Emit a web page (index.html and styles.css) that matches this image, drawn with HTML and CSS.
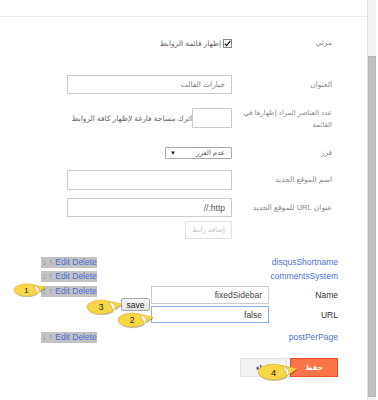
FILE: index.html
```html
<!DOCTYPE html>
<html lang="ar">
<head>
    <meta charset="UTF-8">
    <meta name="viewport" content="width=device-width, initial-scale=1.0">
    <title>إعدادات قائمة الروابط</title>
    <link rel="stylesheet" href="styles.css">
</head>
<body>
<svg class="defs" width="0" height="0">
    <symbol id="balloon" viewBox="0 0 38 18">
        <path d="M23 3.2 L36 6 L27 12.5 Z M1 9 A14 7 0 1 0 29 9 A14 7 0 1 0 1 9 Z" />
    </symbol>
</svg>
<div class="page">
    <main class="panel">
        <div class="topbar"></div>

        <!-- widget settings -->
        <form class="settings" dir="rtl">
            <div class="row row-visible">
                <span class="label">مرئي</span>
                <div class="field">
                    <span class="check">
                        <svg width="7" height="7" viewBox="0 0 7 7"><path d="M0.8 3.6 L2.6 5.6 L6.4 0.8" fill="none" stroke="#111" stroke-width="1.2"/></svg>
                    </span>
                    <span class="hint">إظهار قائمة الروابط</span>
                </div>
            </div>

            <div class="row row-title">
                <span class="label">العنوان</span>
                <div class="field">
                    <input class="text-input" type="text" value="خيارات القالب">
                </div>
            </div>

            <div class="row row-count">
                <span class="label label-two">عدد العناصر المراد إظهارها في القائمة</span>
                <div class="field">
                    <input class="text-input small-input" type="text" value="">
                    <span class="hint">اترك مساحة فارغة لإظهار كافة الروابط</span>
                </div>
            </div>

            <div class="row row-sort">
                <span class="label">فرز</span>
                <div class="field">
                    <div class="select"><span>عدم الفرز</span><span class="caret">▼</span></div>
                </div>
            </div>

            <div class="row row-name">
                <span class="label">اسم الموقع الجديد</span>
                <div class="field">
                    <input class="text-input" type="text" value="">
                </div>
            </div>

            <div class="row row-url">
                <span class="label">عنوان URL للموقع الجديد</span>
                <div class="field">
                    <input class="text-input url-input" type="text" value="http://">
                </div>
            </div>

            <div class="row row-add">
                <span class="label"></span>
                <div class="field">
                    <button class="add-btn" type="button" disabled>إضافة رابط</button>
                </div>
            </div>
        </form>

        <!-- link list -->
        <div class="links">
            <div class="link-row row-first">
                <span class="tools"><span class="arrows">↓ ↑</span> Edit Delete</span>
                <span class="link-name">disqusShortname</span>
            </div>
            <div class="link-row row-next">
                <span class="tools"><span class="arrows">↓ ↑</span> Edit Delete</span>
                <span class="link-name">commentsSystem</span>
            </div>
            <div class="link-row row-edit">
                <span class="tools"><span class="arrows">↓ ↑</span> Edit Delete</span>
                <div class="editor">
                    <button class="save-btn" type="button">save</button>
                    <input class="edit-input" type="text" value="fixedSidebar">
                    <span class="edit-label">Name</span>
                    <input class="edit-input edit-focus" type="text" value="false">
                    <span class="edit-label">URL</span>
                </div>
            </div>
            <div class="link-row row-last">
                <span class="tools"><span class="arrows">↓ ↑</span> Edit Delete</span>
                <span class="link-name">postPerPage</span>
            </div>

            <div class="actions">
                <button class="cancel-btn" type="button">إلغاء</button>
                <button class="save-main" type="button">حفظ</button>
            </div>
        </div>

        <!-- numbered callouts -->
        <svg class="callout callout-1" viewBox="0 0 38 18"><use href="#balloon" class="shadow" x="0.8" y="1.2"/><use href="#balloon" class="fill"/><text x="15" y="12.3">1</text></svg>
        <svg class="callout callout-3" viewBox="0 0 38 18"><use href="#balloon" class="shadow" x="0.8" y="1.2"/><use href="#balloon" class="fill"/><text x="15" y="12.3">3</text></svg>
        <svg class="callout callout-2" viewBox="0 0 38 18"><use href="#balloon" class="shadow" x="0.8" y="1.2"/><use href="#balloon" class="fill"/><text x="15" y="12.3">2</text></svg>
        <svg class="callout callout-4" viewBox="0 0 38 18"><use href="#balloon" class="shadow" x="0.8" y="1.2"/><use href="#balloon" class="fill"/><text x="15" y="12.3">4</text></svg>
    </main>

    <div class="scrollbar">
        <div class="scroll-thumb"></div>
    </div>
</div>
</body>
</html>
```

FILE: styles.css
```css
* {
    box-sizing: border-box;
}
body {
    margin: 0;
    background: #fff;
    font-family: "Liberation Sans", "DejaVu Sans", Arial, sans-serif;
    font-size: 8.5px;
    color: #555;
}
.defs {
    position: absolute;
}
.page {
    display: flex;
    width: 378px;
    height: 400px;
    overflow: hidden;
}
.panel {
    position: relative;
    width: 367px;
    flex: none;
}
.scrollbar {
    width: 9px;
    flex: none;
    background: #f3f3f3;
    border-left: 1px solid #e4e4e4;
}
.scroll-thumb {
    margin-top: 56px;
    height: 341px;
    background: #c1c1c1;
    border: 1px solid #b8b8b8;
}
.topbar {
    height: 17px;
    border-bottom: 1px solid #ececec;
}

/* settings form */
.settings {
    padding-right: 35px;
    font-size: 7.5px;
}
.row {
    display: grid;
    grid-template-columns: 95px 165px;
    column-gap: 5px;
    align-items: center;
}
.label {
    color: #888;
    text-align: right;
    line-height: 12px;
}
.field {
    display: flex;
    align-items: center;
}
.row-visible { margin-top: 20px; height: 12px; }
.row-title { margin-top: 26px; }
.row-count { margin-top: 13px; align-items: start; }
.row-sort { margin-top: 16px; }
.row-name { margin-top: 11px; }
.row-url { margin-top: 8px; }
.row-add { margin-top: 4px; }

.label-two {
    font-size: 7px;
}
.row-count .field {
    margin-top: 1px;
}
.check {
    width: 9px;
    height: 9px;
    border: 1px solid #888;
    background: #fff;
    display: flex;
    align-items: center;
    justify-content: center;
    margin-left: 2px;
}
.hint {
    color: #666;
    white-space: nowrap;
}
.text-input {
    width: 165px;
    height: 19px;
    border: 1px solid #ccc;
    padding: 0 6px;
    font: inherit;
    color: #777;
    background: #fff;
    outline: none;
}
.url-input {
    font-size: 8.5px;
    color: #555;
}
.row-name .text-input {
    height: 20px;
}
.small-input {
    width: 40px;
    height: 20px;
}
.select {
    width: 67px;
    height: 12px;
    border: 1px solid #a9a9a9;
    border-radius: 1px;
    display: flex;
    justify-content: space-between;
    align-items: center;
    padding: 0 6px 0 4px;
    color: #555;
    font-size: 7px;
}
.caret {
    font-size: 6px;
    color: #222;
}
.add-btn {
    width: 47px;
    height: 18px;
    border: 1px solid #e0e0e0;
    background: #fff;
    color: #c2c2c2;
    font: inherit;
    font-size: 7px;
    padding: 0;
}

/* link list */
.links {
    padding: 0 29px 0 41px;
}
.link-row {
    display: flex;
    justify-content: space-between;
    align-items: flex-start;
}
.row-first { margin-top: 18px; }
.row-next { margin-top: 3px; }
.row-edit { margin-top: 4px; }
.row-last { margin-top: 9px; }
.tools {
    width: 56px;
    height: 11px;
    line-height: 11px;
    padding-left: 1px;
    background: #c3c3c3;
    color: #4f6fd6;
    white-space: nowrap;
}
.arrows {
    color: #6d7fae;
}
.link-name {
    color: #4f6fd6;
    line-height: 11px;
}
.editor {
    display: grid;
    grid-template-columns: 30px 118px 69px;
    grid-template-rows: 18px 17px;
    row-gap: 2px;
}
.save-btn {
    grid-column: 1;
    grid-row: 1 / 3;
    align-self: center;
    width: 29px;
    height: 13px;
    padding: 0;
    border: 1px solid #a8a8a8;
    border-radius: 2px;
    background: linear-gradient(#f7f7f7, #e4e4e4);
    color: #222;
    font: inherit;
    line-height: 10px;
}
.edit-input {
    grid-column: 2;
    width: 118px;
    border: 1px solid #ccc;
    padding: 0 6px;
    font: inherit;
    color: #444;
    text-align: right;
    background: #fff;
    outline: none;
}
.edit-focus {
    border-color: #8eaef0;
}
.edit-label {
    grid-column: 3;
    align-self: center;
    text-align: right;
    color: #333;
}
.actions {
    display: flex;
    justify-content: flex-end;
    gap: 3px;
    margin-top: 15px;
}
.cancel-btn,
.save-main {
    height: 19px;
    padding: 0;
    font: inherit;
    font-size: 7px;
    font-weight: bold;
}
.cancel-btn {
    width: 47px;
    border: 1px solid #e2e2e2;
    background: #f2f2f2;
    color: #555;
}
.save-main {
    width: 48px;
    border: 1px solid #ea4d22;
    background: #fb7548;
    color: #fff;
}

/* callouts */
.callout {
    position: absolute;
    overflow: visible;
}
.callout .shadow {
    fill: rgba(0, 0, 0, 0.25);
}
.callout .fill {
    fill: #f7d648;
    stroke: #dcb52d;
    stroke-width: 0.6;
}
.callout text {
    font-family: "Liberation Sans", Arial, sans-serif;
    font-size: 8.5px;
    fill: #222;
    text-anchor: middle;
}
.callout-1 { left: 13px; top: 282px; width: 34px; height: 16px; }
.callout-3 { left: 86px; top: 298px; width: 38px; height: 18px; }
.callout-2 { left: 117px; top: 311px; width: 38px; height: 18px; }
.callout-4 { left: 257px; top: 362px; width: 42px; height: 20px; }
```
